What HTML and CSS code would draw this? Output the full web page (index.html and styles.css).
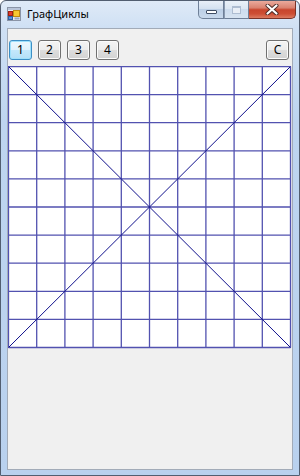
FILE: index.html
```html
<!DOCTYPE html>
<html lang="ru">
<head>
<meta charset="utf-8">
<title>ГрафЦиклы</title>
<link rel="stylesheet" href="styles.css">
</head>
<body>
<div class="window">
  <div class="titlebar">
    <svg class="app-icon" width="14" height="14" viewBox="0 0 14 14">
      <rect x="0.5" y="0.5" width="13" height="13" fill="#e8eaee" stroke="#8a94a6"/>
      <rect x="1" y="1" width="12" height="2" fill="#b8c4d8"/>
      <rect x="1.5" y="4.5" width="4" height="4" fill="#e03a2a" stroke="#a02010"/>
      <rect x="1.5" y="9.5" width="4" height="3" fill="#5b8fd8" stroke="#3060a0"/>
      <rect x="6.5" y="3.5" width="6" height="6" fill="#f8c830" stroke="#c08a10"/>
      <rect x="7.5" y="10.5" width="5" height="2" fill="#9aa8c0"/>
    </svg>
    <span class="title">ГрафЦиклы</span>
    <div class="caption">
      <div class="cap min"><span class="min-glyph"></span></div>
      <div class="cap max"><span class="max-glyph"></span></div>
      <div class="cap close">
        <svg width="14" height="11" viewBox="0 0 14 11">
          <path d="M2.5 1.5 L11.5 9.5 M11.5 1.5 L2.5 9.5" stroke="#4a2a26" stroke-width="4" stroke-linecap="round"/>
          <path d="M2.5 1.5 L11.5 9.5 M11.5 1.5 L2.5 9.5" stroke="#ffffff" stroke-width="2.2" stroke-linecap="round"/>
        </svg>
      </div>
    </div>
  </div>
  <div class="client">
    <div class="toolbar">
      <button class="btn focused">1</button>
      <button class="btn">2</button>
      <button class="btn">3</button>
      <button class="btn">4</button>
      <button class="btn btn-c">C</button>
    </div>
    <svg class="grid" width="284" height="283" viewBox="0 0 284 283">
      <rect class="grid-bg" x="0.5" y="0.5" width="282" height="281"/>
      <g class="grid-lines">
        <path d="M0.5 0.5V281.5 M28.7 0.5V281.5 M56.9 0.5V281.5 M85.1 0.5V281.5 M113.3 0.5V281.5 M141.5 0.5V281.5 M169.7 0.5V281.5 M197.9 0.5V281.5 M226.1 0.5V281.5 M254.3 0.5V281.5 M282.5 0.5V281.5"/>
        <path d="M0.5 0.5H282.5 M0.5 28.6H282.5 M0.5 56.7H282.5 M0.5 84.8H282.5 M0.5 112.9H282.5 M0.5 141H282.5 M0.5 169.1H282.5 M0.5 197.2H282.5 M0.5 225.3H282.5 M0.5 253.4H282.5 M0.5 281.5H282.5"/>
      </g>
      <path class="diag" d="M0.5 0.5 L282.5 281.5 M282.5 0.5 L0.5 281.5"/>
    </svg>
  </div>
</div>
</body>
</html>
```

FILE: styles.css
```css
html, body {
  margin: 0;
  padding: 0;
}
body {
  width: 300px;
  height: 476px;
  overflow: hidden;
  background: #ffffff;
  font-family: "Noto Sans", "DejaVu Sans", sans-serif;
}
.window {
  box-sizing: border-box;
  width: 300px;
  height: 476px;
  border: 1px solid #525e70;
  border-radius: 6px 6px 0 0;
  background: linear-gradient(to bottom, #dfeaf7 0px, #cfe0f4 27px, #bed5f0 120px, #b9d1ee 100%);
  display: flex;
  flex-direction: column;
}
.titlebar {
  height: 27px;
  display: flex;
  align-items: flex-start;
  flex: none;
}
.app-icon {
  display: block;
  margin: 6px 0 0 6px;
  flex: none;
}
.title {
  margin: 5px 0 0 6px;
  font-size: 11px;
  line-height: 16px;
  color: #000000;
}
.caption {
  margin-left: auto;
  margin-right: 3px;
  display: flex;
}
.cap {
  box-sizing: border-box;
  height: 18px;
  border: 1px solid #6f8098;
  border-top: none;
  display: flex;
  align-items: center;
  justify-content: center;
}
.min {
  width: 26px;
  border-radius: 0 0 0 5px;
  background: linear-gradient(to bottom, #e8eff8 0%, #d4e1f0 45%, #bccfe6 50%, #c9d9ec 100%);
  align-items: flex-end;
  padding-bottom: 4px;
}
.min-glyph {
  display: block;
  width: 9px;
  height: 2px;
  background: #ffffff;
  border: 1px solid #3f4d63;
  border-radius: 1px;
}
.max {
  width: 25px;
  border-left: 1px solid #8a9ab0;
  background: linear-gradient(to bottom, #eaf1f9 0%, #dce7f3 45%, #cddcee 50%, #d6e3f1 100%);
}
.max-glyph {
  display: block;
  width: 7px;
  height: 5px;
  border: 1px solid #aebdd1;
  border-top-width: 2px;
  background: #e8eef6;
}
.close {
  width: 47px;
  border-left: none;
  border-color: #7a3328;
  border-radius: 0 0 5px 0;
  background: linear-gradient(to bottom, #eaaa9c 0%, #d98270 40%, #c8452d 52%, #cd4e34 75%, #dc7a60 100%);
}
.close svg {
  display: block;
}
.client {
  flex: 1;
  margin: 0 6px 5px 6px;
  border: 1px solid #a2abb8;
  background: #f0f0f0;
  display: flex;
  flex-direction: column;
}
.toolbar {
  display: flex;
  gap: 6px;
  padding: 11px 3px 0 1px;
}
.btn {
  box-sizing: border-box;
  width: 23px;
  height: 20px;
  padding: 0;
  margin: 0;
  border: 1px solid #707070;
  border-radius: 3px;
  background: linear-gradient(to bottom, #f4f4f4 0%, #ececec 50%, #dedede 50%, #d2d2d2 100%);
  box-shadow: inset 0 0 0 1px #fbfbfb;
  font-family: "Noto Sans", "DejaVu Sans", sans-serif;
  font-size: 12px;
  line-height: 18px;
  color: #000000;
  text-align: center;
}
.btn.focused {
  border-color: #3c8fc6;
  background: linear-gradient(to bottom, #edf8fe 0%, #dff2fd 50%, #c4e8fc 50%, #b3dff7 100%);
  box-shadow: inset 0 0 0 1px #9fe0fb;
}
.btn-c {
  margin-left: auto;
}
.grid {
  display: block;
  margin-top: 6px;
}
.grid-bg {
  fill: #ffffff;
}
.grid-lines path {
  fill: none;
  stroke: #5252b0;
  stroke-width: 1.3;
}
.diag {
  fill: none;
  stroke: #10108c;
  stroke-width: 1;
}
```
